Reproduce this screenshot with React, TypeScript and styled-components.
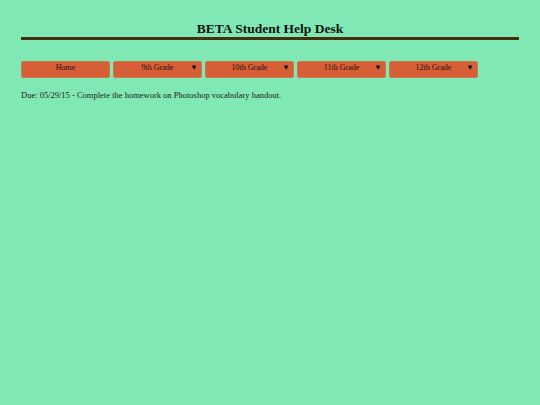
import styled, { createGlobalStyle } from "styled-components";

const GlobalStyle = createGlobalStyle`
  html, body {
    margin: 0;
    padding: 0;
    background: #80e8b4;
  }
  body {
    font-family: "Liberation Serif", "Times New Roman", serif;
    color: #1a1a1a;
  }
`;

const items = [
  { label: "Home", menu: false },
  { label: "9th Grade", menu: true },
  { label: "10th Grade", menu: true },
  { label: "11th Grade", menu: true },
  { label: "12th Grade", menu: true },
];

export default function App() {
  return (
    <>
      <GlobalStyle />
      <Page>
        <Title>BETA Student Help Desk</Title>
        <NavBar>
          {items.map((item) => (
            <NavButton key={item.label}>
              <span>{item.label}</span>
              {item.menu && <Arrow>▼</Arrow>}
            </NavButton>
          ))}
        </NavBar>
        <Notice>
          Due: 05/29/15 - Complete the homework on Photoshop vocabulary handout.
        </Notice>
      </Page>
    </>
  );
}

const Page = styled.div`
  padding: 20px 21px 0 21px;
  min-height: 405px;
  box-sizing: border-box;
`;

const Title = styled.h1`
  margin: 0;
  font-size: 13.5px;
  font-weight: bold;
  text-align: center;
  line-height: 17px;
  border-bottom: 3px solid #45300a;
  color: #111;
`;

const NavBar = styled.div`
  display: flex;
  gap: 3px;
  margin-top: 21px;
`;

const NavButton = styled.div`
  position: relative;
  width: 89px;
  height: 17px;
  box-sizing: border-box;
  background: #d65f38;
  border: 1px solid #c9794f;
  border-radius: 2px;
  font-size: 8px;
  color: #2a1208;
  text-align: center;
  padding-top: 1px;
`;

const Arrow = styled.span`
  position: absolute;
  right: 3px;
  top: 1px;
  font-size: 8px;
  color: #111;
`;

const Notice = styled.p`
  margin: 12px 0 0 0;
  font-size: 8.5px;
  color: #222;
`;
